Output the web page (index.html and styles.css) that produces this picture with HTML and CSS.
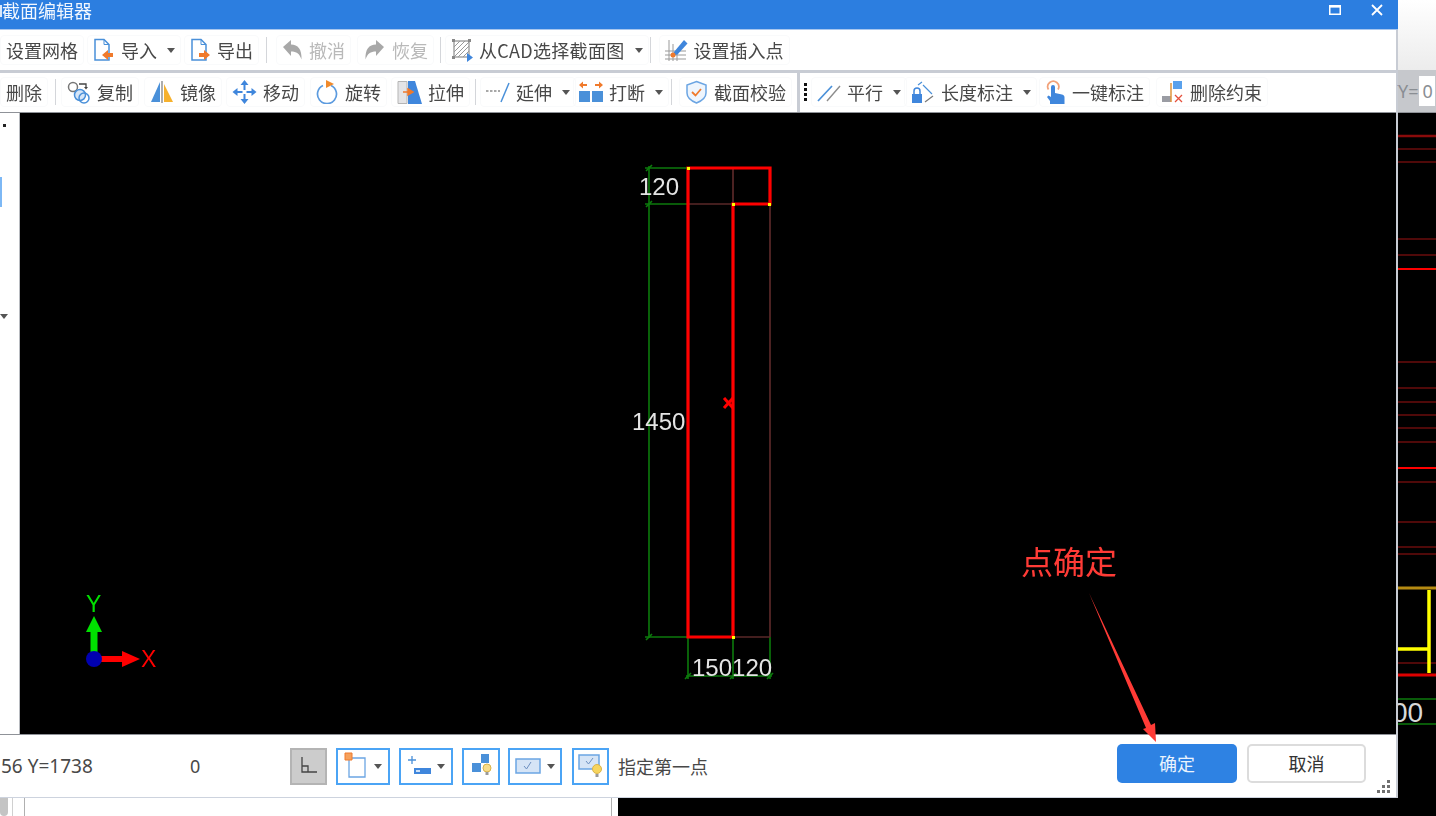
FILE: index.html
```html
<!doctype html>
<html>
<head>
<meta charset="utf-8">
<title>截面编辑器</title>
<link rel="stylesheet" href="styles.css">
</head>

<body>
<div class="page">
	<div class="left">
		<div class="dialog">
			<div class="titlebar">
				<i class="title-icon"></i>
				<span class="title">截面编辑器</span>
				<svg class="win-max" width="12" height="10" viewBox="0 0 12 10"><path d="M.75 1.5h10.5v7.75H.75z" fill="none" stroke="#fff" stroke-width="1.5"/><path d="M0 0h12v2.5H0z" fill="#fff"/></svg>
				<svg class="win-close" width="12" height="12" viewBox="0 0 12 12"><path d="M1 1l10 10M11 1L1 11" stroke="#fff" stroke-width="1.8"/></svg>
			</div>
			<div class="body">
				<div class="row row1">
					<div class="tool t-grid"><span>设置网格</span></div>
					<div class="tool t-import">
						<svg width="22" height="24" viewBox="0 0 22 24"><path d="M2 1.5h9l5 5V22H2z" fill="#fff" stroke="#4a90d9" stroke-width="1.5"/><path d="M11 1.5v5h5" fill="none" stroke="#4a90d9"/><path d="M9 17l6-5v3h5v4h-5v3z" fill="#f07a2c"/></svg>
						<span>导入</span><i class="caret"></i>
					</div>
					<div class="tool t-export">
						<svg width="21" height="24" viewBox="0 0 21 24"><path d="M2 1.5h9l5 5V22H2z" fill="#fff" stroke="#4a90d9" stroke-width="1.5"/><path d="M11 1.5v5h5" fill="none" stroke="#4a90d9"/><path d="M20 17l-6-5v3H9v4h5v3z" fill="#f07a2c"/></svg>
						<span>导出</span>
					</div>
					<i class="sep s-a"></i>
					<div class="tool off t-undo">
						<svg width="21" height="24" viewBox="0 0 21 24"><path d="M1 9l8-7v4.5c7 0 11 5 10.500 15-2-6-5-8-10.500-8V18z" fill="#a8a8a8"/></svg>
						<span>撤消</span>
					</div>
					<div class="tool off t-redo">
						<svg width="23" height="24" viewBox="0 0 23 24"><path d="M21 9l-8-7v4.500C6 6.500 2 11.500 2.500 21.500c2-6 5-8 10.500-8V18z" fill="#a8a8a8"/></svg>
						<span>恢复</span>
					</div>
					<i class="sep s-b"></i>
					<div class="tool t-cad">
						<svg width="22" height="24" viewBox="0 0 22 24"><path d="M3 3h15v16H3z" fill="#fff" stroke="#777"/><path d="M3 9l6-6M3 14l11-11M3 19L18 4M7 19L18 8M12 19l6-6" stroke="#999"/><path d="M1 1h3v3H1zM17 1h3v3h-3zM1 18h3v3H1z" fill="#888"/><path d="M16 15l6 4.500-6 4.500z" fill="#3f86dc"/></svg>
						<span class="cad-label">从CAD选择截面图</span><i class="caret"></i>
					</div>
					<i class="sep s-c"></i>
					<div class="tool t-insert">
						<svg width="23" height="24" viewBox="0 0 23 24"><path d="M0 13h21M0 17h21M0 21h21M4 2v21M8 6v17M12 13v10" stroke="#999"/><path d="M9 14L19 2l3.500 3.500-10 11-4.500 1z" fill="#3f86dc"/><circle cx="8" cy="17" r="2.500" fill="#f07a2c"/></svg>
						<span>设置插入点</span>
					</div>
				</div>
				<div class="row row2">
					<div class="tool t-del"><span>删除</span></div>
					<i class="sep s-d"></i>
					<div class="tool t-copy">
						<svg width="24" height="24" viewBox="0 0 24 24"><circle cx="6" cy="7" r="4.500" fill="#fff" stroke="#777" stroke-width="1.500"/><path d="M12 4h7v4" fill="none" stroke="#444" stroke-width="1.300"/><path d="M17 7l2 2.500L21 7z" fill="#444"/><circle cx="13" cy="15" r="5.500" fill="#d6e6f8" stroke="#4a90d9" stroke-width="1.500"/><circle cx="17" cy="18" r="5" fill="none" stroke="#4a90d9" stroke-width="1.500"/></svg>
						<span>复制</span>
					</div>
					<div class="tool t-mirror">
						<svg width="24" height="24" viewBox="0 0 24 24"><path d="M10 2v20H1z" fill="#4a90d9"/><path d="M12 1v22" stroke="#777" stroke-width="1.200"/><path d="M14 4l9 18h-9z" fill="#f6b12d"/></svg>
						<span>镜像</span>
					</div>
					<div class="tool t-move">
						<svg width="25" height="24" viewBox="0 0 25 24"><path d="M12.500 0l4 5h-3v5h-2V5h-3zM12.500 24l4-5h-3v-5h-2v5h-3zM.500 12l5-4v3h5v2h-5v3zM24.500 12l-5-4v3h-5v2h5v3z" fill="#3f86dc"/></svg>
						<span>移动</span>
					</div>
					<div class="tool t-rotate">
						<svg width="23" height="24" viewBox="0 0 23 24"><path d="M7 5.500a9.500 9.500 0 1 0 8 0" fill="none" stroke="#5c9bdf" stroke-width="1.700"/><path d="M10 0l8 4-8 4z" fill="#f08a2c"/></svg>
						<span>旋转</span>
					</div>
					<div class="tool t-stretch">
						<svg width="25" height="24" viewBox="0 0 25 24"><path d="M1 1.500h9v22H1z" fill="#e4e4e6" stroke="#b5b5b5"/><path d="M11 1h7l7 23H11z" fill="#3f86dc"/><path d="M6 12h8M11 9l5 3-5 3z" stroke="#f07a2c" fill="#f07a2c" stroke-width="1.500"/></svg>
						<span>拉伸</span>
					</div>
					<i class="sep s-e"></i>
					<div class="tool t-extend">
						<svg width="24" height="24" viewBox="0 0 24 24"><path d="M0 11h14" stroke="#8c8c8c" stroke-width="1.300" stroke-dasharray="2.500 1.500"/><path d="M23 3l-8 19" stroke="#4a90d9" stroke-width="1.500"/></svg>
						<span>延伸</span><i class="caret"></i>
					</div>
					<div class="tool t-break">
						<svg width="24" height="24" viewBox="0 0 24 24"><path d="M0 11h11v11H0zM13 11h11v11H13z" fill="#4a90d9"/><path d="M0 5l4-3.500v2.500h4v2H4v2.500zM24 5l-4-3.500v2.500h-4v2h4v2.500z" fill="#f07a2c"/></svg>
						<span>打断</span><i class="caret"></i>
					</div>
					<i class="sep s-f"></i>
					<div class="tool t-check">
						<svg width="23" height="24" viewBox="0 0 23 24"><path d="M11.500 1.500l9.500 3.500v8c0 5-4.500 8-9.500 10C6.500 21 2 18 2 13V5z" fill="#eef5fd" stroke="#6ba5e3" stroke-width="1.500"/><path d="M7 12l3.500 3.500L16 9" fill="none" stroke="#f07a2c" stroke-width="1.800"/></svg>
						<span>截面校验</span>
					</div>
					<i class="divider"></i>
					<i class="dots"></i>
					<div class="tool t-parallel">
						<svg width="24" height="24" viewBox="0 0 24 24"><path d="M1 21L15 6" stroke="#4a90d9" stroke-width="1.700"/><path d="M10 21L23 6" stroke="#8c8c8c" stroke-width="1.400"/></svg>
						<span>平行</span><i class="caret"></i>
					</div>
					<div class="tool t-length">
						<svg width="25" height="24" viewBox="0 0 25 24"><path d="M2 14h10v9H2z" fill="#3f86dc"/><path d="M4 14v-3a3 3 0 0 1 6 0v3" fill="none" stroke="#3f86dc" stroke-width="1.500"/><path d="M8 5l4-3M13 5l9 9" stroke="#4a90d9" stroke-width="1.200"/><path d="M15 22l8-6" stroke="#777" stroke-width="1.200"/></svg>
						<span>长度标注</span><i class="caret"></i>
					</div>
					<div class="tool t-hand">
						<svg width="21" height="24" viewBox="0 0 21 24"><path d="M3.500 9.500a5.500 5.500 0 1 1 9.500 0" fill="none" stroke="#f2a27a" stroke-width="1.700"/><path d="M6 7a2 2 0 0 1 4 0v6l7 1.500c2 .5 2.500 1.500 2.500 3V24H5v-3l-3-4 1.500-1.500L6 17z" fill="#3f86dc"/></svg>
						<span>一键标注</span>
					</div>
					<div class="tool t-unbind">
						<svg width="22" height="24" viewBox="0 0 22 24"><path d="M0 16h9v6H0z" fill="#9a9ca3"/><path d="M9 3v19" stroke="#e0953a" stroke-width="1.500"/><path d="M11 1h9v8h-9z" fill="#5aa1ec"/><path d="M13 15l7 7M20 15l-7 7" stroke="#e5503c" stroke-width="1.300"/></svg>
						<span>删除约束</span>
					</div>
				</div>
				<div class="work">
					<div class="palette">
						<i class="pal-dot"></i>
						<i class="pal-blue"></i>
						<i class="caret pal-caret"></i>
					</div>
					<svg class="canvas" viewBox="20 113 1376 621">
						<g stroke="#0c7a0c" stroke-width="1.600" fill="none">
							<path d="M649 166V638M645 168H688M645 204H688M645 637H688M688 637V679M733 637V679M770 637V679M686 676H772"/>
							<path d="M646 171l6-6M646 207l6-6M646 640l6-6M685 679l6-6M730 679l6-6M767 679l6-6"/>
						</g>
						<path d="M733 168V204M688 204H733M733 637H770M770 204V637" stroke="#5a2828" stroke-width="1.700" fill="none"/>
						<path d="M688 168H770V204H733V637H688Z" stroke="#f00" stroke-width="3.200" fill="none"/>
						<path d="M687 167h3v3h-3zM732 203h3v3h-3zM768 203h3v3h-3zM732 636h3v3h-3z" fill="#ff0"/>
						<path d="M724 398l9 10M733 398l-9 10" stroke="#f00" stroke-width="3"/>
						<text class="dim" x="639" y="195">120</text>
						<text class="dim" x="632" y="430">1450</text>
						<text class="dim" x="692" y="676">150120</text>
						<path d="M90.500 652V632H86l8-16 8 16H97.500V652z" fill="#00e000"/>
						<path d="M100 656H122V651L140 659 122 667V662H100z" fill="#f00"/>
						<circle cx="94" cy="659" r="8" fill="#0000b0"/>
						<text class="axis axis-y" x="86" y="612">Y</text>
						<text class="axis axis-x" x="141" y="667">X</text>
					</svg>
				</div>
				<div class="status">
					<span class="coord">56 Y=1738</span>
					<span class="zero">0</span>
					<div class="sbtn sb-ortho">
						<svg width="22" height="22" viewBox="0 0 22 22"><path d="M4 2v15h15M4 11h6v6" fill="none" stroke="#444" stroke-width="1.300"/></svg>
					</div>
					<div class="sbtn wide sb-snap">
						<svg width="24" height="28" viewBox="0 0 24 28"><path d="M5 6h16v19H5z" fill="#fff" stroke="#6ba5e3" stroke-width="1.300"/><path d="M1 1h7v7H1z" fill="#f6a15c" stroke="#f07a2c"/></svg>
						<i class="caret"></i>
					</div>
					<div class="sbtn wide sb-dyn">
						<svg width="24" height="28" viewBox="0 0 24 28"><path d="M1 8h8M5 4v8" stroke="#4a90d9" stroke-width="1.300"/><path d="M7 16h17v6H7z" fill="#3f86dc"/><path d="M9 18h4v2H9z" fill="#cfe2f8"/></svg>
						<i class="caret"></i>
					</div>
					<div class="sbtn narrow sb-hint">
						<svg width="24" height="28" viewBox="0 0 24 28"><path d="M12 2h8v9h-8zM3 11h9v9H3z" fill="#4a90d9"/><circle cx="18" cy="16" r="4" fill="#f8dc8a" stroke="#d9b34a"/><path d="M16.500 20h3v3h-3z" fill="#999"/></svg>
					</div>
					<div class="sbtn wide sb-view">
						<svg width="26" height="20" viewBox="0 0 26 20"><path d="M1 3h24v14H1z" fill="#d5e4f6" stroke="#6ba5e3" stroke-width="1.500"/><path d="M9 10l2.500 3L16 6" fill="none" stroke="#6b8fc0"/></svg>
						<i class="caret"></i>
					</div>
					<div class="sbtn narrow sb-tip">
						<svg width="28" height="28" viewBox="0 0 28 28"><path d="M2 3h20v14H2z" fill="#d5e4f6" stroke="#6ba5e3" stroke-width="1.500"/><path d="M9 9l2.500 3L16 6" fill="none" stroke="#6b8fc0"/><circle cx="20" cy="17" r="4.500" fill="#f7d55e" stroke="#d9b34a"/><path d="M18.500 22h3v3h-3z" fill="#999"/></svg>
					</div>
					<span class="prompt">指定第一点</span>
					<button class="btn btn-ok">确定</button>
					<button class="btn btn-cancel">取消</button>
					<svg class="grip" width="13" height="13" viewBox="0 0 13 13"><path d="M10 0h3v3h-3zM5 5h3v3H5zM10 5h3v3h-3zM0 10h3v3H0zM5 10h3v3H5zM10 10h3v3h-3z" fill="#707070"/></svg>
				</div>
			</div>
		</div>
		<div class="under">
			<i class="under-thumb"></i>
			<i class="under-line"></i>
			<div class="under-panel"></div>
		</div>
	</div>
	<div class="side">
		<div class="side-top"></div>
		<div class="side-bar"><span>Y=</span><span class="side-input">0</span></div>
		<svg class="side-cad" viewBox="1398 113 38 703">
			<path d="M1398 136H1436" stroke="#8a0b0b" stroke-width="2.500"/>
			<path d="M1398 149H1436M1398 162H1436M1398 239H1436M1398 255H1436M1398 362H1436M1398 388H1436M1398 402H1436M1398 415H1436M1398 428H1436M1398 442H1436M1398 482H1436M1398 522H1436M1398 547H1436M1398 554H1436M1398 663H1436" stroke="#6a0c0c" stroke-width="1.500"/>
			<path d="M1398 269H1436M1398 468H1436" stroke="#f00" stroke-width="1.800"/>
			<path d="M1398 588H1436" stroke="#b58a12" stroke-width="3"/>
			<path d="M1398 649H1429M1429 590V673" stroke="#ff0" stroke-width="3.500" fill="none"/>
			<path d="M1398 675H1436" stroke="#d00" stroke-width="3"/>
			<path d="M1398 699H1436M1398 724H1436" stroke="#0c7a0c" stroke-width="1.600"/>
			<text class="dim-big" x="1392" y="722">00</text>
		</svg>
	</div>
	<span class="note">点确定</span>
	<svg class="note-arrow" width="1436" height="816" viewBox="0 0 1436 816"><path d="M1089 593L1151 725 1155 723 1156 742 1143 729 1146 728Z" fill="#ff3b36"/></svg>
</div>
</body>
</html>
```

FILE: styles.css
```css
*{ box-sizing: border-box; }
html,body{ margin:0; padding:0; background:#000; }
body{ font-family:"Noto Sans CJK SC","Noto Sans",sans-serif; font-size:18px; color:#484848; overflow:hidden; }
i{ display:block; font-style:normal; }
svg{ display:block; flex:none; }

.page{ width:1436px; height:816px; display:flex; position:relative; filter:blur(.3px); overflow:hidden; }
.left{ width:1398px; display:flex; flex-direction:column; }
.dialog{ height:798px; display:flex; flex-direction:column; }

/* title */
.titlebar{ height:30px; background:#2c7ee0; border-bottom:1px solid #a8c6ee; color:#fff; display:flex; align-items:flex-start; }
.title-icon{ width:2px; height:12px; margin-top:5px; background:#dbe9fa; }
.title{ line-height:20px; color:#f2f7fe; }
.win-max{ margin:5px 0 0 auto; }
.win-close{ margin:4px 15px 0 30px; }

.body{ flex:1; display:flex; flex-direction:column; background:#fff; border-right:2px solid #c8ccd4; min-height:0; }

/* toolbars */
.row{ display:flex; align-items:center; background:#fff; }
.row1{ height:43px; border-bottom:3px solid #c8ccd4; }
.row2{ height:40px; border-bottom:1px solid #8f9298; padding-bottom:1px; }
.tool{ display:flex; align-items:center; gap:6px; height:30px; line-height:30px; white-space:nowrap; position:relative; }
.tool::before{ content:""; position:absolute; left:-6px; right:-6px; top:0; bottom:0; border:1px solid #f9fafb; border-radius:4px; }
.tool svg,.tool span,.tool .caret{ position:relative; }
.tool.off{ color:#b9b9b9; }
.cad-label{ letter-spacing:.3px; }
.caret{ width:0; height:0; border:4px solid transparent; border-top:5px solid #555; border-bottom:0; margin-left:4px; }
.sep{ width:1px; height:26px; background:#d4d6da; }
.divider{ width:3px; height:39px; background:#c8ccd4; margin-left:11px; }
.dots{ width:3px; height:18px; margin-left:4px; background:repeating-linear-gradient(#111 0 3px,transparent 3px 5px); }

.t-grid{ margin-left:6px; }
.t-import{ margin-left:15px; }
.t-export{ margin-left:15px; }
.s-a{ margin-left:13px; }
.t-undo{ margin-left:15px; }
.t-redo{ margin-left:18px; }
.s-b{ margin-left:12px; }
.t-cad{ margin-left:10px; }
.s-c{ margin-left:7px; }
.t-insert{ margin-left:14px; }

.t-del{ margin-left:6px; }
.s-d{ margin-left:13px; }
.t-copy{ margin-left:11px; }
.t-mirror{ margin-left:17px; }
.t-move{ margin-left:16px; }
.t-rotate{ margin-left:17px; }
.t-stretch{ margin-left:16px; }
.s-e{ margin-left:11px; }
.t-extend{ margin-left:10px; }
.t-break{ margin-left:9px; }
.s-f{ margin-left:8px; }
.t-check{ margin-left:13px; }
.t-parallel{ margin-left:10px; }
.t-length{ margin-left:9px; }
.t-hand{ margin-left:14px; }
.t-unbind{ margin-left:18px; }

/* drawing area */
.work{ flex:1; display:flex; min-height:0; background:#000; }
.palette{ width:20px; background:#fff; border-right:1px solid #b8bbc0; display:flex; flex-direction:column; }
.pal-dot{ width:3px; height:3px; background:#222; margin:11px 0 0 3px; }
.pal-blue{ width:2px; height:30px; background:#7db8f5; margin-top:50px; }
.pal-caret{ margin:107px 0 0 0; }
.canvas{ width:1376px; height:621px; background:#000; }
.dim{ font-family:"Liberation Sans",sans-serif; font-size:24px; fill:#e4e4e4; }
.dim-big{ font-family:"Liberation Sans",sans-serif; font-size:28px; fill:#d8d8d8; }
.axis{ font-family:"Liberation Sans",sans-serif; font-size:23px; }
.axis-y{ fill:#00e000; }
.axis-x{ fill:#f00; }

/* status bar */
.status{ height:64px; border-top:1px solid #8f9298; border-bottom:1px solid #cdd3de; background:#fff; display:flex; align-items:center; position:relative; padding-right:30px; }
.coord{ margin-left:1px; font-family:"Noto Sans",sans-serif; font-size:19px; width:92px; white-space:nowrap; }
.zero{ margin-left:97px; width:10px; font-family:"Noto Sans",sans-serif; }
.sbtn{ height:37px; border:2px solid #4ba4f5; display:flex; align-items:center; justify-content:center; gap:1px; }
.sbtn .caret{ margin-left:5px; }
.sb-ortho{ width:37px; margin-left:90px; background:#ccc; border-color:#b4b4b4; }
.wide{ width:54px; }
.narrow{ width:38px; }
.sb-snap{ margin-left:9px; }
.sb-dyn{ margin-left:9px; }
.sb-hint{ margin-left:9px; }
.sb-view{ margin-left:8px; }
.sb-tip{ margin-left:10px; width:37px; }
.prompt{ margin-left:9px; white-space:nowrap; }
.btn{ font:inherit; font-size:18px; line-height:1; height:39px; border-radius:5px; padding:0; position:relative; top:-3px; }
.btn-ok{ width:120px; margin-left:auto; background:#2e82e3; border:0; color:#eaf3fd; }
.btn-cancel{ width:119px; margin-left:10px; background:#fff; border:2px solid #dcdcdc; color:#333; }
.grip{ position:absolute; right:6px; bottom:4px; }

/* what lies below the dialog */
.under{ flex:1; background:#fff; display:flex; width:618px; }
.under-thumb{ width:8px; height:18px; background:#c4c4c4; border-radius:0 0 4px 4px; }
.under-line{ width:1px; margin-left:4px; background:#d0d0d0; }
.under-panel{ width:588px; margin-left:11px; border-left:1px solid #b0b0b0; border-right:1px solid #b0b0b0; }

/* window behind, right of the dialog */
.side{ width:38px; display:flex; flex-direction:column; background:#000; }
.side-top{ height:70px; background:linear-gradient(#fff,#ececec); flex:none; }
.side-bar{ height:43px; flex:none; background:#c6c8cc; color:#8a8e93; display:flex; align-items:center; line-height:1; font-family:"Noto Sans",sans-serif; border-bottom:1px solid #8f9298; }
.side-input{ margin-left:1px; width:16px; height:30px; background:#fff; line-height:30px; padding-left:3px; flex:none; }
.side-cad{ width:38px; height:703px; }

/* red note */
.note{ position:absolute; left:1021px; top:541px; font-size:32px; line-height:38px; color:#ff3b36; white-space:nowrap; }
.note-arrow{ position:absolute; left:0; top:0; pointer-events:none; }
```
